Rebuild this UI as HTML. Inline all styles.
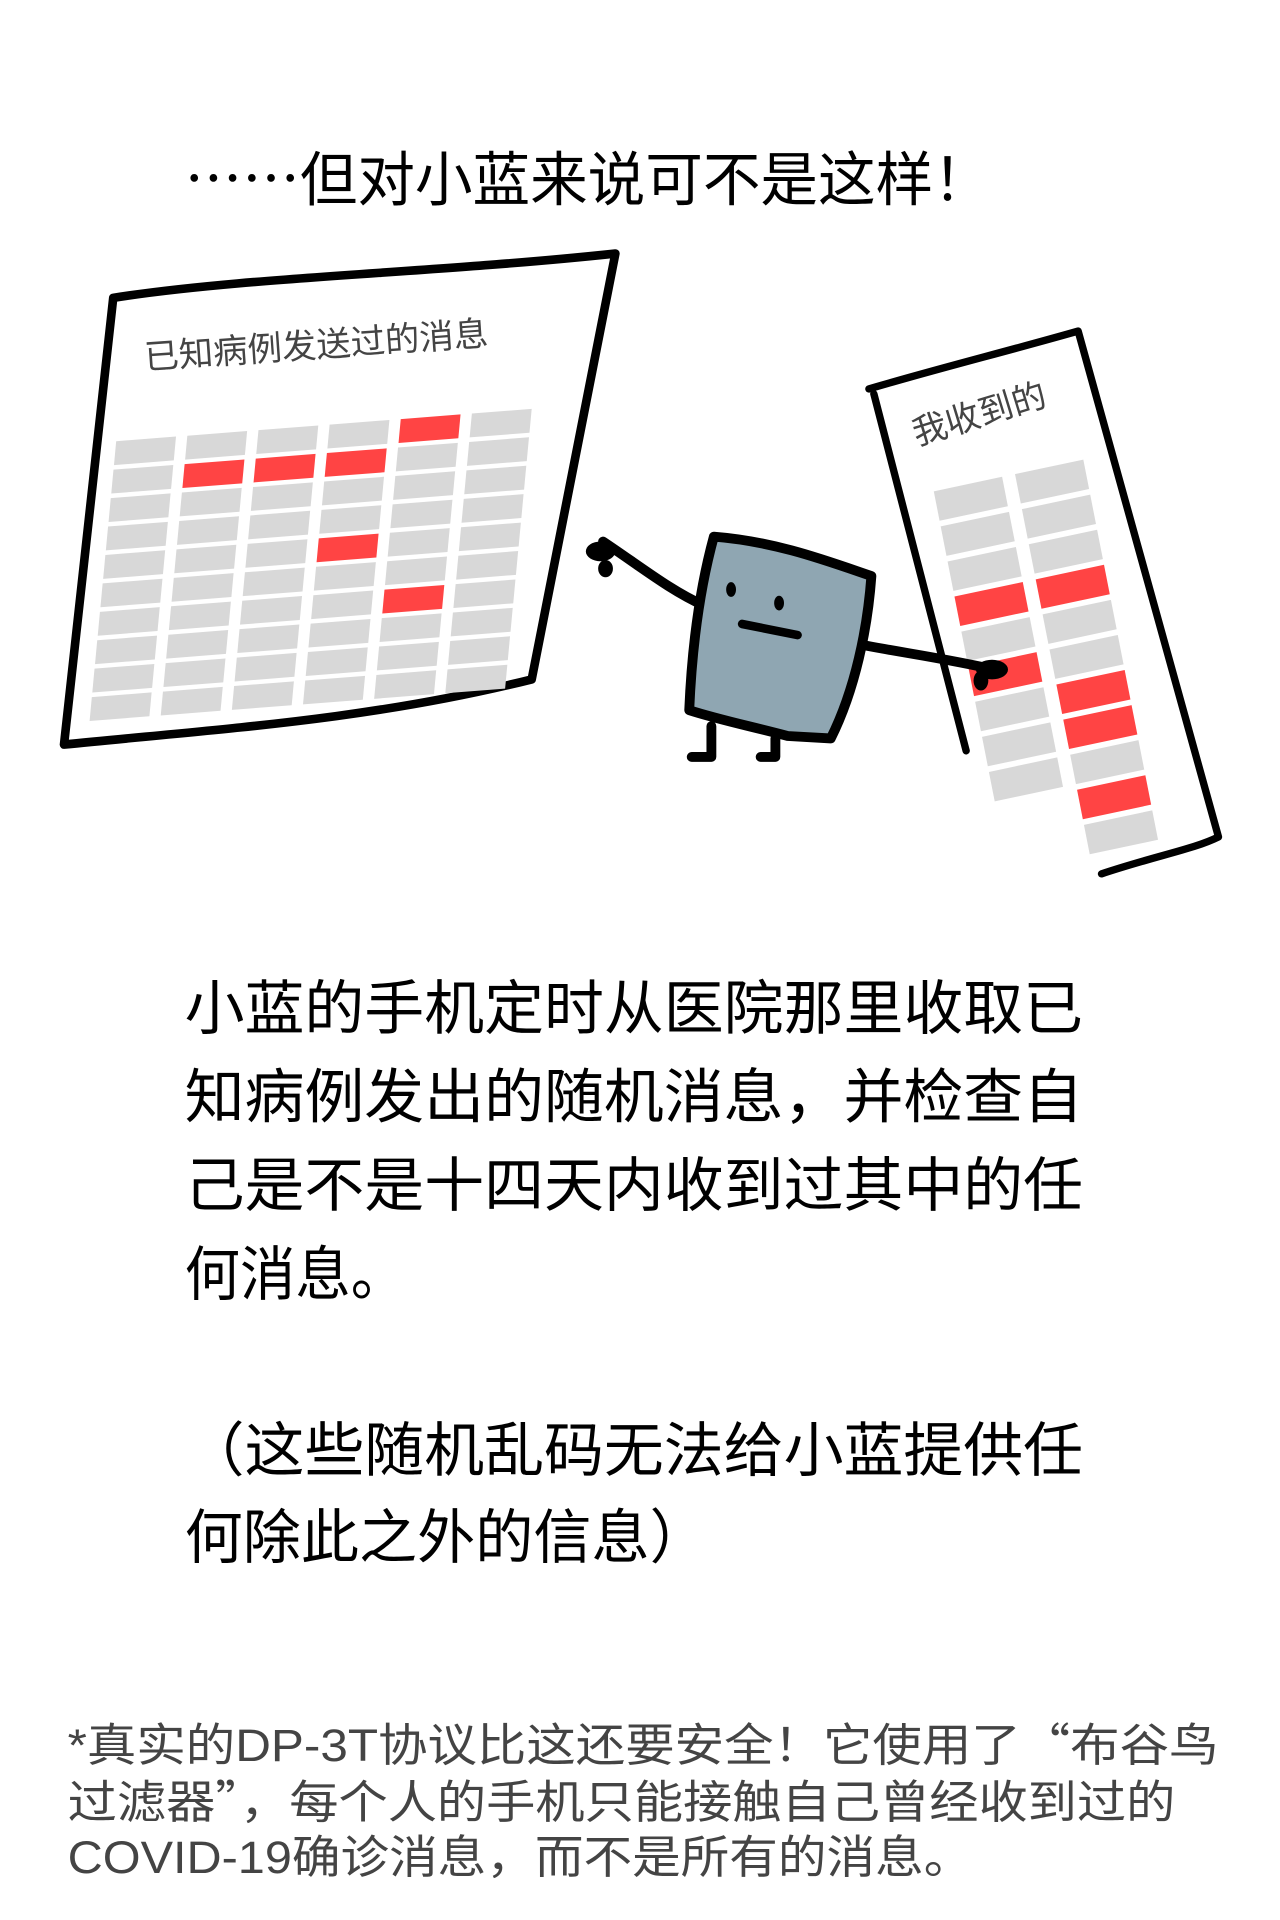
<!DOCTYPE html>
<html><head><meta charset="utf-8"><style>
html,body{margin:0;padding:0;background:#fff;}
svg{display:block;}
text{font-family:"Liberation Sans","Noto Sans CJK SC",sans-serif;}
.cjk{font-family:"Noto Sans CJK SC",sans-serif;}
</style></head><body>
<svg width="1280" height="1920" viewBox="0 0 1040 1560" xmlns="http://www.w3.org/2000/svg">
<rect width="1040" height="1560" fill="#fff"/>
<text x="150" y="163" font-size="48" fill="#000" textLength="655" lengthAdjust="spacingAndGlyphs"><tspan class="cjk">……</tspan>但对小蓝来说可不是这样！</text>

<!-- left sheet -->
<path d="M92,242 C200,225 350,222 500,206 L432,552 C300,585 180,592 52,605 Z" fill="#fff" stroke="#000" stroke-width="7" stroke-linejoin="round"/>
<text transform="translate(118,300) rotate(-4)" font-size="28" fill="#444">已知病例发送过的消息</text>
<g id="grid"></g>

<!-- right sheet -->
<path d="M706,316 L718,330 L785,610 L990,680 L876,269 Z" fill="#fff"/>
<g id="grid2"></g>
<path d="M706,316 C760,300 820,285 876,269 L990,680 M895,710 C940,695 970,690 990,680 M710,320 L785,610" fill="none" stroke="#000" stroke-width="6" stroke-linejoin="round" stroke-linecap="round"/>
<text transform="translate(745,362) rotate(-17)" font-size="28" fill="#444">我收到的</text>

<!-- character -->
<path d="M490,440 C520,460 545,480 572,492" stroke="#000" stroke-width="8" fill="none" stroke-linecap="round"/>
<ellipse cx="488" cy="448" rx="12" ry="8" fill="#000"/>
<ellipse cx="492" cy="462" rx="6" ry="7" fill="#000"/>
<path d="M690,522 C730,530 770,535 812,545" stroke="#000" stroke-width="8" fill="none" stroke-linecap="round"/>
<ellipse cx="806" cy="544" rx="13" ry="8" fill="#000"/>
<ellipse cx="797" cy="553" rx="6" ry="8" fill="#000"/>
<path d="M578,590 L578,615 L562,615 M630,600 L630,615 L618,615" stroke="#000" stroke-width="8" fill="none" stroke-linecap="round" stroke-linejoin="round"/>
<path d="M580,436 C630,440 670,455 708,468 C705,510 695,560 675,600 L640,598 C610,590 585,585 560,577 C562,530 568,480 580,436 Z" fill="#8fa6b2" stroke="#000" stroke-width="8" stroke-linejoin="round"/>
<ellipse cx="594" cy="479" rx="4" ry="6" fill="#000"/>
<ellipse cx="633" cy="490" rx="4" ry="6" fill="#000"/>
<path d="M603,507 L648,516" stroke="#000" stroke-width="7" stroke-linecap="round"/>

<g font-size="48" fill="#000">
<text x="150" y="836" textLength="730" lengthAdjust="spacingAndGlyphs">小蓝的手机定时从医院那里收取已</text>
<text x="150" y="908" textLength="730" lengthAdjust="spacingAndGlyphs">知病例发出的随机消息，并检查自</text>
<text x="150" y="980" textLength="730" lengthAdjust="spacingAndGlyphs">己是不是十四天内收到过其中的任</text>
<text x="150" y="1052" textLength="180" lengthAdjust="spacingAndGlyphs">何消息。</text>
<text x="150" y="1195" textLength="730" lengthAdjust="spacingAndGlyphs">（这些随机乱码无法给小蓝提供任</text>
<text x="150" y="1266" textLength="425" lengthAdjust="spacingAndGlyphs">何除此之外的信息）</text>
</g>
<g font-size="37" fill="#444">
<text x="55" y="1431" textLength="935" lengthAdjust="spacingAndGlyphs">*真实的DP-3T协议比这还要安全！它使用了<tspan class="cjk">“</tspan>布谷鸟</text>
<text x="55" y="1477" textLength="900" lengthAdjust="spacingAndGlyphs">过滤器<tspan class="cjk">”</tspan>，每个人的手机只能接触自己曾经收到过的</text>
<text x="55" y="1522" textLength="735" lengthAdjust="spacingAndGlyphs">COVID-19确诊消息，而不是所有的消息。</text>
</g>
</svg>
<script>
(function(){
var NS="http://www.w3.org/2000/svg";
function cell(o,u,v,i,j,red){
  var g=0.08;
  var p=[[i+g,j+g],[i+1-g,j+g],[i+1-g,j+1-g],[i+g,j+1-g]].map(function(c){
    return (o[0]+u[0]*c[0]+v[0]*c[1]).toFixed(1)+","+(o[1]+u[1]*c[0]+v[1]*c[1]).toFixed(1);});
  var e=document.createElementNS(NS,"polygon");
  e.setAttribute("points",p.join(" "));
  e.setAttribute("fill",red?"#ff4444":"#d8d8d8");
  return e;
}
var g=document.getElementById('grid');
var redL={"4,0":1,"1,1":1,"2,1":1,"3,1":1,"3,4":1,"4,6":1};
for(var i=0;i<6;i++)for(var j=0;j<10;j++)
  g.appendChild(cell([90,357],[57.8,-4.5],[-2.2,23.1],i,j,redL[i+","+j]));
var g2=document.getElementById('grid2');
var redR={"0,3":1,"1,3":1,"0,5":1,"1,6":1,"1,7":1,"1,9":1};
for(var i=0;i<2;i++)for(var j=0;j<(i?11:9);j++)
  g2.appendChild(cell([753,398],[66,-14],[5.6,28.5],i,j,redR[i+","+j]));
})();
</script>
</body></html>
